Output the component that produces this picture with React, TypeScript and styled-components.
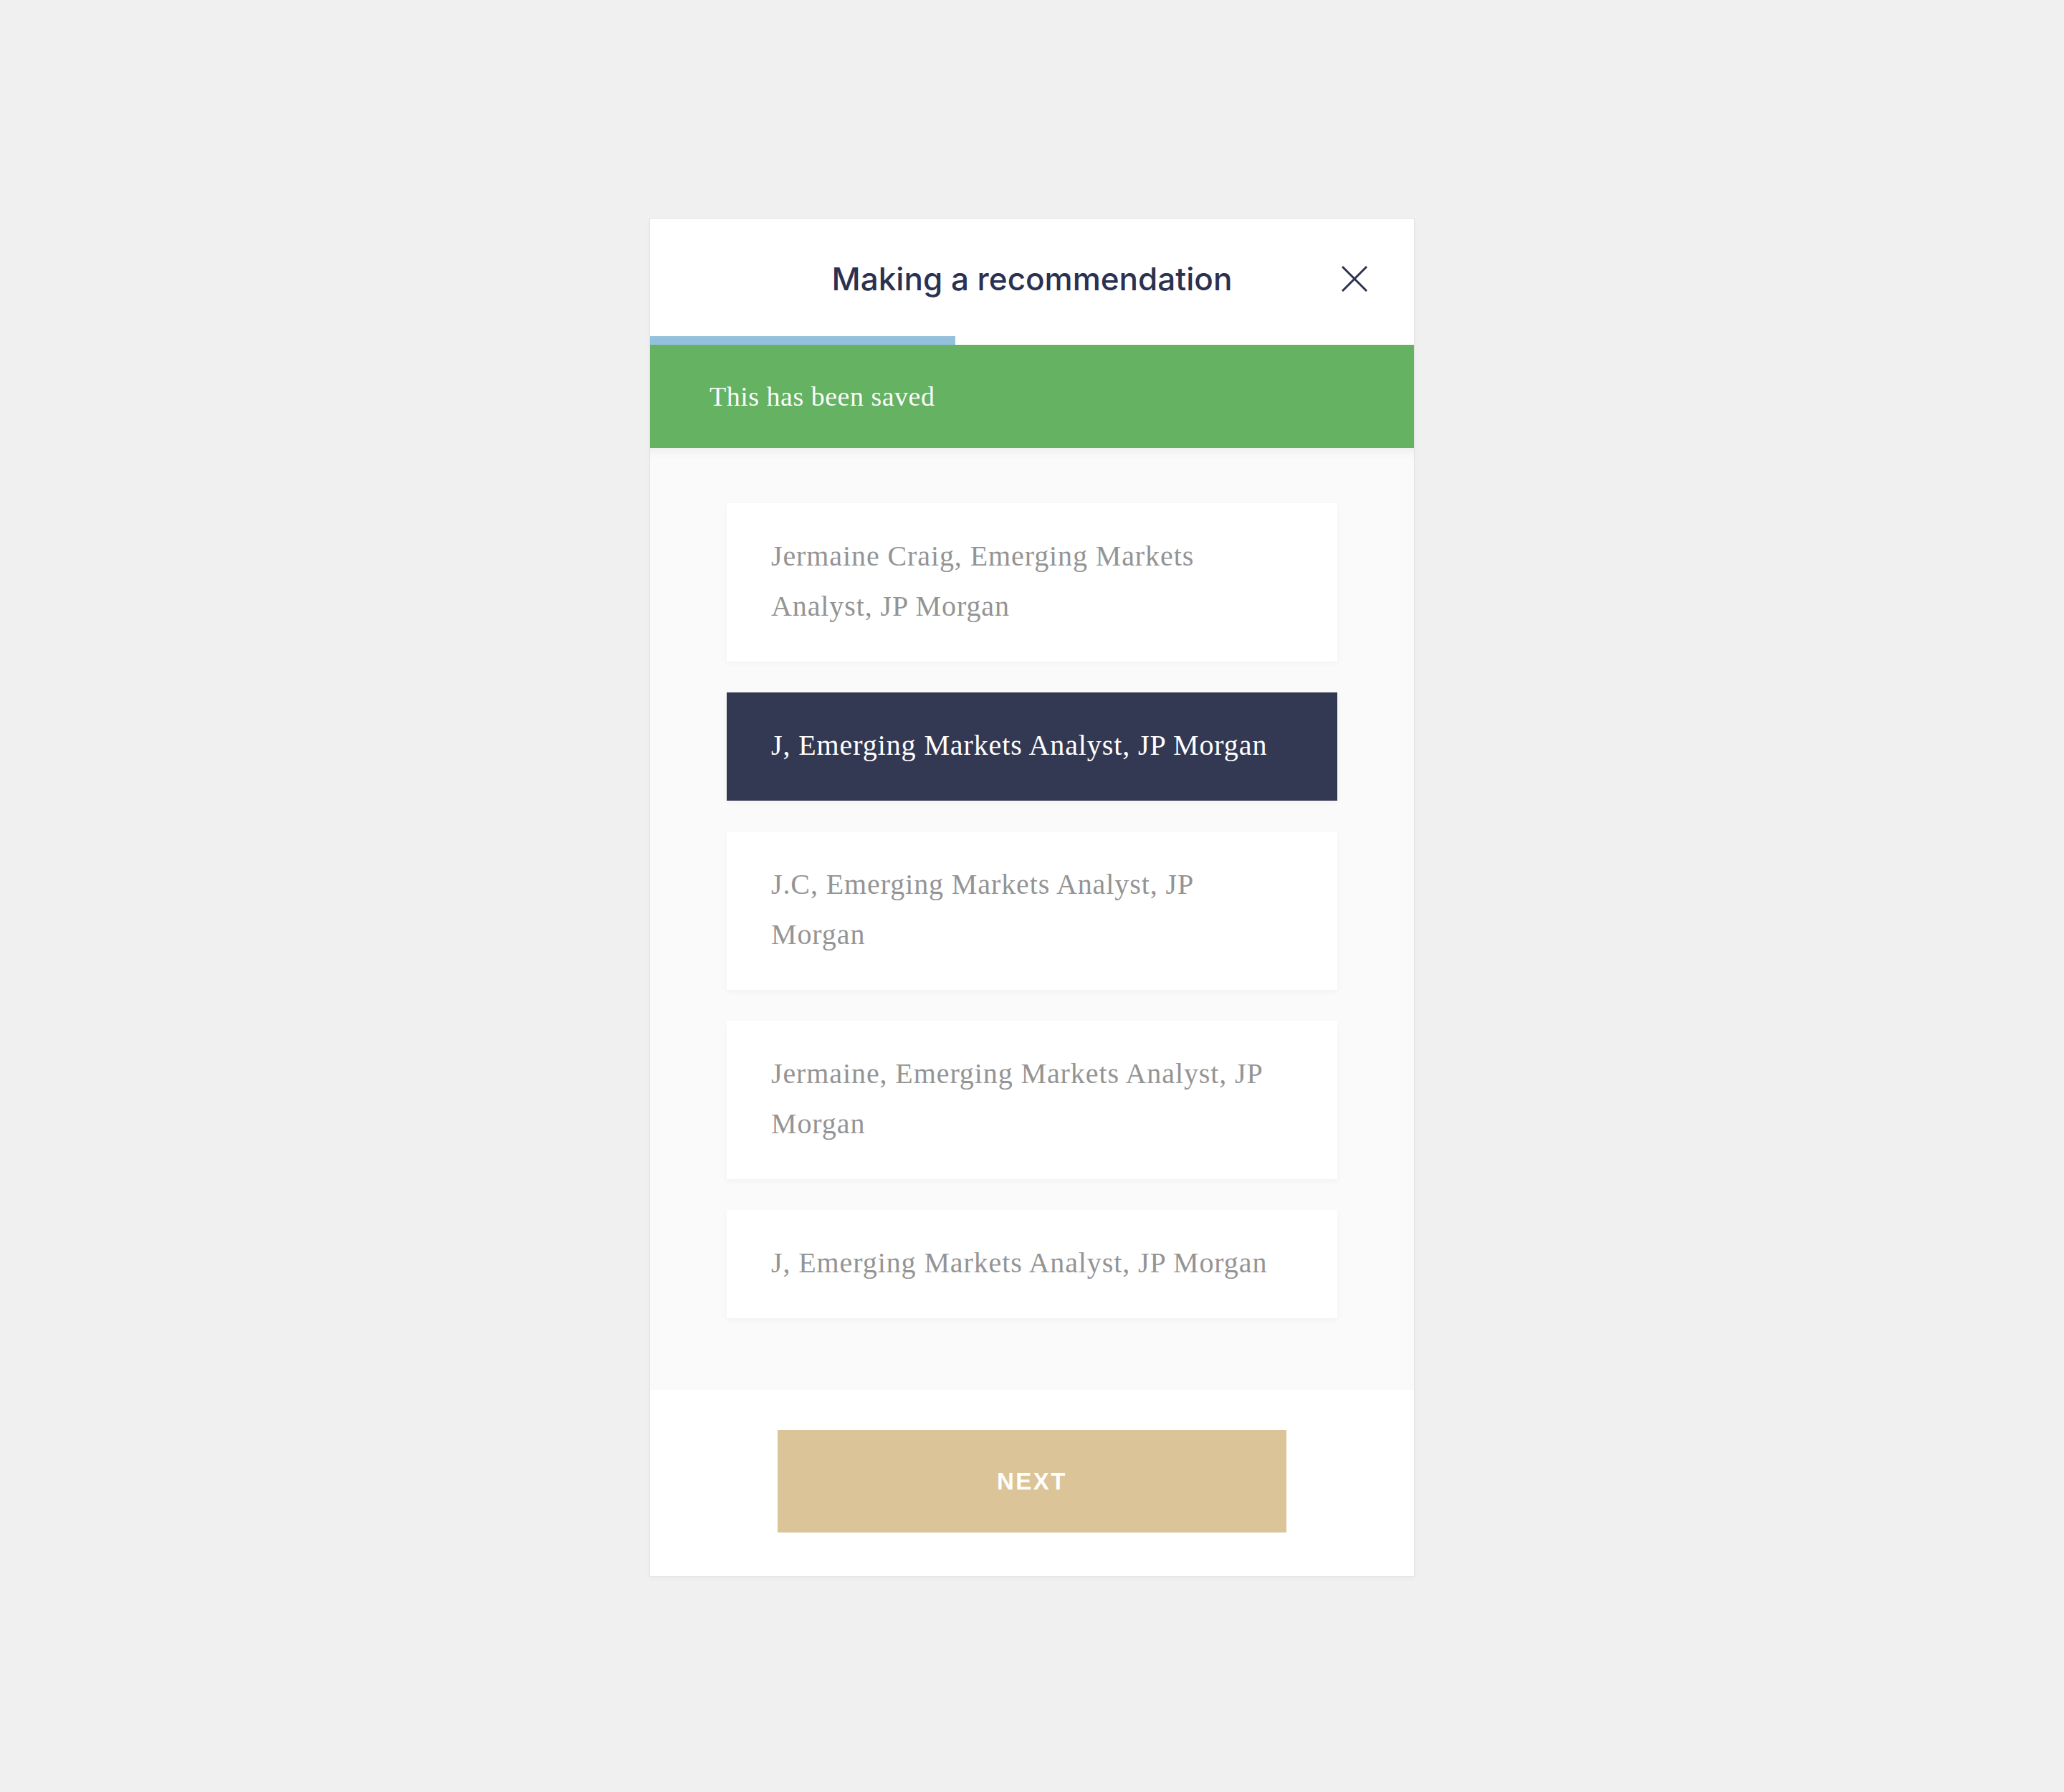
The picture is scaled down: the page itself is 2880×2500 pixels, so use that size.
import styled, { createGlobalStyle } from 'styled-components';

const GlobalStyle = createGlobalStyle`
  html, body {
    margin: 0;
    padding: 0;
    background: #f0f0f0;
  }
  body {
    font-family: "Liberation Sans", Arial, sans-serif;
  }
`;

const Page = styled.div`
  min-height: 2500px;
  box-sizing: border-box;
  padding-top: 304px;
  display: flex;
  justify-content: center;
  align-items: flex-start;
`;

const Modal = styled.div`
  width: 1068px;
  box-sizing: border-box;
  background: #fff;
  border: 1px solid #e3e3e3;
  box-shadow: 0 2px 6px rgba(0, 0, 0, 0.03);
  display: flex;
  flex-direction: column;
`;

const Header = styled.header`
  height: 164px;
  box-sizing: border-box;
  padding: 4px 65px 0;
  display: grid;
  grid-template-columns: 1fr auto 1fr;
  align-items: center;
`;

const Title = styled.h1`
  grid-column: 2;
  margin: 0;
  font-family: Inter, "Liberation Sans", sans-serif;
  font-size: 44px;
  font-weight: 500;
  color: #2b3150;
`;

const CloseButton = styled.button`
  grid-column: 3;
  justify-self: end;
  width: 36px;
  height: 36px;
  padding: 0;
  border: 0;
  background: none;
  color: #2c3350;
  cursor: pointer;
  display: flex;
`;

const ProgressTrack = styled.div`
  height: 12px;
  background: #fff;
`;

const ProgressFill = styled.div`
  height: 100%;
  background: #93c0db;
`;

const Banner = styled.div`
  height: 144px;
  box-sizing: border-box;
  padding-left: 83px;
  display: flex;
  align-items: center;
  background: #64b262;
  color: #fbfbfb;
  font-family: "Liberation Serif", "Times New Roman", serif;
  font-size: 38px;
  letter-spacing: 0.5px;
`;

const Body = styled.div`
  background: #fafafa;
  padding: 77px 107px 100px;
  display: flex;
  flex-direction: column;
  gap: 43px;
  box-shadow: inset 0 14px 16px -12px rgba(0, 0, 0, 0.07);
`;

const Option = styled.div<{ $selected?: boolean }>`
  padding: 39px 70px 42px 62px;
  background: ${(p) => (p.$selected ? '#343953' : '#fff')};
  color: ${(p) => (p.$selected ? '#fff' : '#949494')};
  font-family: "Liberation Serif", "Times New Roman", serif;
  font-size: 40px;
  line-height: 70px;
  letter-spacing: 0.9px;
  box-shadow: 0 3px 8px rgba(0, 0, 0, 0.035);
  cursor: pointer;
`;

const Footer = styled.footer`
  padding: 56px 0 61px;
  display: flex;
  justify-content: center;
  background: #fff;
`;

const NextButton = styled.button`
  width: 710px;
  height: 143px;
  border: 0;
  background: #dbc498;
  color: #fff;
  font-family: "Liberation Sans", Arial, sans-serif;
  font-size: 33px;
  font-weight: 700;
  letter-spacing: 2.5px;
  cursor: pointer;
`;

const options = [
  'Jermaine Craig, Emerging Markets Analyst, JP Morgan',
  'J, Emerging Markets Analyst, JP Morgan',
  'J.C, Emerging Markets Analyst, JP Morgan',
  'Jermaine, Emerging Markets Analyst, JP Morgan',
  'J, Emerging Markets Analyst, JP Morgan',
];

const selectedIndex = 1;
const progress = 40;

const CloseIcon = () => (
  <svg width="36" height="36" viewBox="0 0 36 36" fill="none">
    <path d="M1 1L35 35M35 1L1 35" stroke="currentColor" strokeWidth="3" />
  </svg>
);

export default function App() {
  return (
    <>
      <GlobalStyle />
      <Page>
        <Modal>
          <Header>
            <Title>Making a recommendation</Title>
            <CloseButton aria-label="Close">
              <CloseIcon />
            </CloseButton>
          </Header>
          <ProgressTrack>
            <ProgressFill style={{ width: `${progress}%` }} />
          </ProgressTrack>
          <Banner>This has been saved</Banner>
          <Body>
            {options.map((label, i) => (
              <Option key={i} $selected={i === selectedIndex}>
                {label}
              </Option>
            ))}
          </Body>
          <Footer>
            <NextButton>NEXT</NextButton>
          </Footer>
        </Modal>
      </Page>
    </>
  );
}
